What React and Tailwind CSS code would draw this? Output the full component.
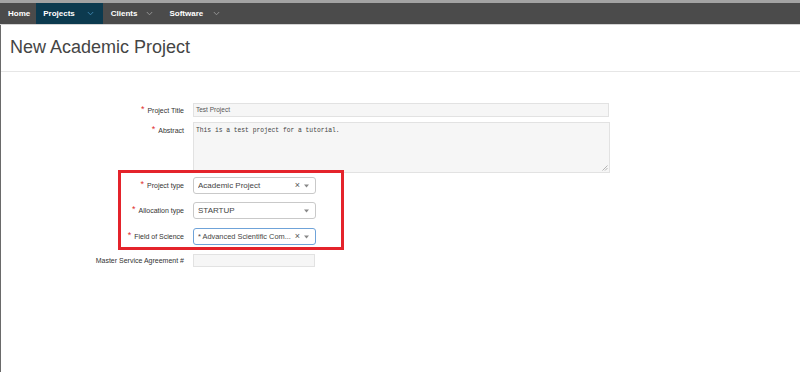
import React from 'react'

function Chevron({ color }) {
    return (
        <svg width="7" height="5" viewBox="0 0 7 5" className="shrink-0">
            <polyline points="0.8,1 3.5,3.8 6.2,1" fill="none" stroke={color} strokeWidth="0.9" />
        </svg>
    )
}

function Label({ text, top }) {
    return (
        <div className={`w-[183px] shrink-0 flex justify-end text-[7px] text-[#333] ${top ? 'self-start pt-[4px]' : ''}`}>
            <span className="text-[#e0302f] text-[9px] leading-[7px] mr-[3px]">*</span>
            <span className="leading-[9px]">{text}</span>
        </div>
    )
}

function Select({ value, clear, focus, small }) {
    return (
        <div className={`ml-[9px] w-[123px] h-[17px] flex items-center bg-white rounded-[3px] border pl-[4px] pr-[6px] ${focus ? 'border-[#6fa3d9]' : 'border-[#c9c9c9]'}`}>
            <span className={`flex-1 min-w-0 text-[#444] whitespace-nowrap overflow-hidden ${small ? 'text-[7.4px]' : 'text-[8px]'}`}>{value}</span>
            {clear && <span className="text-[9px] leading-none text-[#555] ml-[2px] mr-[4px]">×</span>}
            <svg width="5" height="4" viewBox="0 0 5 4" className="shrink-0"><polygon points="0,0.5 5,0.5 2.5,3.5" fill="#888" /></svg>
        </div>
    )
}

export default function App() {
    return (
        <div className="w-[800px] h-[372px] bg-white overflow-hidden relative" style={{ fontFamily: '"Liberation Sans", Arial, sans-serif' }}>

            <div className="border-t-[3px] border-[#a3a3a3] bg-[#4b4b4b] h-[25px] flex items-stretch border-b border-b-[#d4d4d4]">
                <div className="pl-[8px] pr-[6px] flex items-center text-white text-[8px] font-bold">Home</div>
                <div className="bg-[#0c3a4f] pl-[7px] pr-[9px] flex items-center gap-[12px] text-white text-[8px] font-bold">
                    Projects
                    <Chevron color="#3f87b0" />
                </div>
                <div className="pl-[8px] pr-[8px] flex items-center gap-[9px] text-white text-[8px] font-bold">
                    Clients
                    <Chevron color="#9a9a9a" />
                </div>
                <div className="pl-[8px] flex items-center gap-[10px] text-white text-[8px] font-bold">
                    Software
                    <Chevron color="#9a9a9a" />
                </div>
            </div>

            <div className="border-l border-[#6a6a6a] h-full">
                <div className="h-[47px] pt-[13px] pl-[9px] border-b border-[#e6e6e6]">
                    <h1 className="text-[18px] leading-[18px] text-[#454545]">New Academic Project</h1>
                </div>

                <div className="pt-[31px]">
                    <div className="flex items-center">
                        <Label text="Project Title" />
                        <div className="ml-[9px] w-[416px] h-[14px] bg-[#f6f6f6] border border-[#e2e2e2] flex items-center pl-[2px] text-[6.5px] text-[#555]">Test Project</div>
                    </div>

                    <div className="flex items-start mt-[5px]">
                        <Label text="Abstract" top />
                        <div className="ml-[9px] w-[417px] h-[51px] bg-[#f6f6f6] border border-[#e2e2e2] relative pl-[2px] pt-[3px] text-[6.3px] text-[#444]" style={{ fontFamily: '"Liberation Mono", monospace' }}>
                            This is a test project for a tutorial.
                            <svg width="6" height="6" viewBox="0 0 6 6" className="absolute right-[1px] bottom-[1px]">
                                <line x1="0.5" y1="5.5" x2="5.5" y2="0.5" stroke="#999" strokeWidth="0.7" />
                                <line x1="3" y1="5.5" x2="5.5" y2="3" stroke="#999" strokeWidth="0.7" />
                            </svg>
                        </div>
                    </div>

                    <div className="flex items-center mt-[4px]">
                        <Label text="Project type" />
                        <Select value="Academic Project" clear />
                    </div>

                    <div className="flex items-center mt-[8px]">
                        <Label text="Allocation type" />
                        <Select value="STARTUP" />
                    </div>

                    <div className="flex items-center mt-[9px]">
                        <Label text="Field of Science" />
                        <Select value="* Advanced Scientific Com..." clear focus small />
                    </div>

                    <div className="flex items-center mt-[9px]">
                        <div className="w-[183px] shrink-0 text-right text-[7px] text-[#333] leading-[9px]">Master Service Agreement #</div>
                        <div className="ml-[9px] w-[122px] h-[13px] bg-[#f6f6f6] border border-[#e2e2e2]"></div>
                    </div>
                </div>
            </div>

            <div className="absolute left-[118px] top-[170px] w-[226px] h-[80px] border-[3px] border-[#e4232b]"></div>
        </div>
    )
}
